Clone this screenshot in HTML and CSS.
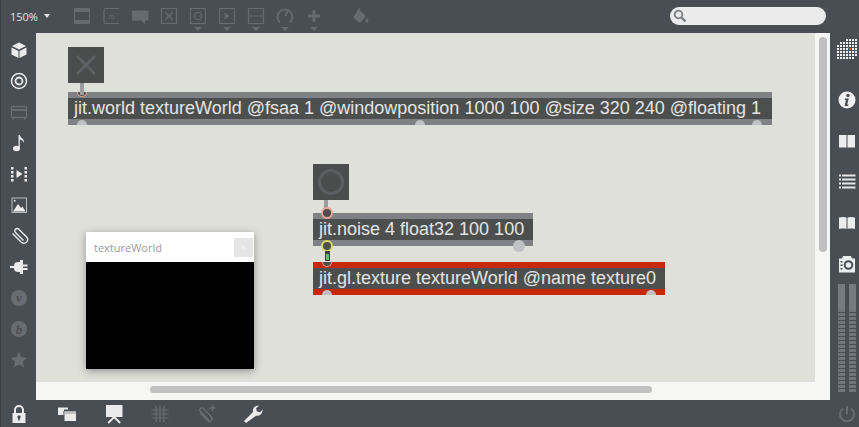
FILE: index.html
```html
<!DOCTYPE html>
<html lang="en">
<head>
    <meta charset="UTF-8">
    <title>textureWorld</title>
    <link rel="stylesheet" href="styles.css">
</head>
<body>
<div class="app">

    <!-- top toolbar -->
    <div class="topbar">
        <div class="zoom-label"><span>150%</span><i class="caret light"></i></div>
        <div class="tool"><svg width="18" height="18" viewBox="0 0 18 18" fill="none" stroke="currentColor"><path d="M1.5 1v16M1.5 1.5h15v15h-15"/><path d="M2 3.5h15M2 14.5h15" stroke-width="3"/></svg></div>
        <div class="tool"><svg width="18" height="18" viewBox="0 0 18 18" fill="none" stroke="currentColor" stroke-width="1.2"><path d="M17 1.5H4a2 2 0 0 0-2 2v11a2 2 0 0 0 2 2h13"/><text x="6.5" y="11.5" class="msg-m">m</text></svg></div>
        <div class="tool"><svg width="18" height="18" viewBox="0 0 18 18" fill="currentColor"><path d="M1 3.5h16.5v10H14v4l-4-4H1z"/></svg></div>
        <div class="tool"><svg width="18" height="18" viewBox="0 0 18 18" fill="none" stroke="currentColor" stroke-width="1.2"><rect x="1.5" y="1.5" width="15" height="15"/><path d="M5 5l8 8M13 5l-8 8"/></svg></div>
        <div class="tool"><svg width="18" height="18" viewBox="0 0 18 18" fill="none" stroke="currentColor" stroke-width="1.2"><rect x="1.5" y="1.5" width="15" height="15"/><circle cx="9" cy="9" r="3.5"/></svg><i class="caret"></i></div>
        <div class="tool"><svg width="18" height="18" viewBox="0 0 18 18" fill="none" stroke="currentColor" stroke-width="1.2"><rect x="1.5" y="1.5" width="15" height="15"/><path d="M6.5 5.5l5 3.5-5 3.5z" fill="currentColor" stroke="none"/></svg><i class="caret"></i></div>
        <div class="tool"><svg width="18" height="18" viewBox="0 0 18 18" fill="none" stroke="currentColor" stroke-width="1.2"><rect x="1.5" y="1.5" width="15" height="15"/><path d="M1.5 9h15"/></svg><i class="caret"></i></div>
        <div class="tool"><svg width="18" height="18" viewBox="0 0 18 18" fill="none" stroke="currentColor" stroke-width="1.8"><path d="M4 15.5A7.5 7.5 0 1 1 14 15.5"/><path d="M9 9l3-5"/></svg><i class="caret"></i></div>
        <div class="tool"><svg width="18" height="18" viewBox="0 0 18 18" fill="currentColor"><path d="M7.5 3h3v4.500H15v3h-4.500V15h-3v-4.500H3v-3h4.500z"/></svg><i class="caret"></i></div>
        <div class="tool bucket"><svg width="18" height="18" viewBox="0 0 18 18" fill="currentColor"><path d="M8 1l1.5 1-1 1.5L15 9l-6 7-7-5.500z"/><path d="M16 11c1 1.5 1.5 2.300 1.5 3a1.500 1.500 0 0 1-3 0c0-.7.5-1.500 1.500-3z"/></svg></div>
        <div class="search"><svg width="14" height="14" viewBox="0 0 14 14" fill="none" stroke="#7b7e82"><circle cx="5.5" cy="5.5" r="3.8" stroke-width="1.8"/><path d="M8.5 8.5l4 4" stroke-width="2.4"/></svg></div>
    </div>

    <!-- left object palette -->
    <div class="sidebar-left">
        <svg width="20" height="20" viewBox="0 0 20 20" class="on"><path d="M10 2.5l7 3.500-7 3.500L3 6z" fill="currentColor"/><path d="M2.5 7.5l7 3.500v7l-7-3.500zM17.5 7.5l-7 3.500v7l7-3.500z" fill="currentColor"/></svg>
        <svg width="20" height="20" viewBox="0 0 20 20" class="on" fill="none" stroke="currentColor"><circle cx="10" cy="10" r="7.5" stroke-width="1.5"/><circle cx="10" cy="10" r="3.5" stroke-width="1.8"/></svg>
        <svg width="20" height="20" viewBox="0 0 20 20" class="off" fill="none" stroke="currentColor" stroke-width="1.3"><rect x="2.5" y="4.5" width="15" height="11" rx="1"/><path d="M2.5 8h15" stroke-width="2"/><path d="M4 16v2M16 16v2"/></svg>
        <svg width="20" height="20" viewBox="0 0 20 20" class="on" fill="currentColor"><ellipse cx="7.5" cy="15.5" rx="3.5" ry="2.8"/><path d="M9.5 2h1.300c.4 3 5 3.500 4 8-.6-2.300-2.500-3.300-4-3.500V15H9.500z"/></svg>
        <svg width="20" height="20" viewBox="0 0 20 20" class="on" fill="currentColor"><path d="M7.5 6l6 4-6 4z"/><path d="M2 3h2.500v2.500H2zM2 7h2.500v2.500H2zM2 11h2.500v2.500H2zM2 15h2.500v2.500H2zM15.500 3H18v2.500h-2.500zM15.500 7H18v2.500h-2.500zM15.500 11H18v2.500h-2.500zM15.500 15H18v2.500h-2.500z"/></svg>
        <svg width="20" height="20" viewBox="0 0 20 20" class="on"><rect x="3" y="3" width="14.5" height="14.5" fill="none" stroke="#b9bbbd" stroke-width="1"/><circle cx="5.7" cy="5.7" r="1" fill="currentColor"/><path d="M4 16.500l5-7.500 3 4 1.500-1.500 3 5z" fill="currentColor"/></svg>
        <svg width="20" height="20" viewBox="0 0 20 20" class="on" fill="none" stroke="currentColor" stroke-width="1.4"><path d="M14.500 14.500L6.500 6.500a2.300 2.300 0 0 1 3.300-3.300l8 8a3.700 3.700 0 0 1-5.200 5.200L3.500 7.500"/></svg>
        <svg width="20" height="20" viewBox="0 0 20 20" class="on" fill="currentColor"><path d="M1 9h4v-.5C5 6 7 5 9 5h3v10H9c-2 0-4-1-4-3.500V11H1z"/><path d="M11 3h3v4.500h4.500v2H14V11h4.500v2H14v4h-3z"/></svg>
        <svg width="20" height="20" viewBox="0 0 20 20" class="off"><circle cx="10" cy="10" r="8" fill="currentColor"/><text x="10" y="14" class="badge-letter">v</text></svg>
        <svg width="20" height="20" viewBox="0 0 20 20" class="off"><circle cx="10" cy="10" r="8" fill="currentColor"/><text x="10" y="14.5" class="badge-letter">b</text></svg>
        <svg width="20" height="20" viewBox="0 0 20 20" class="off" fill="currentColor"><path d="M10 2l2.400 5.300 5.800.6-4.300 3.900 1.200 5.700L10 14.600 4.900 17.500l1.200-5.700L1.800 7.900l5.800-.6z"/></svg>
    </div>

    <!-- patcher -->
    <div class="canvas-frame">
        <div class="canvas">
            <div class="ui-box toggle-box" style="left:32px;top:14px"><svg width="36" height="36" viewBox="0 0 36 36" stroke="#5f6264" stroke-width="2.5"><path d="M9 9l18 18M27 9L9 27"/></svg></div>
            <div class="obj" style="left:32px;top:59px;width:704px">jit.world textureWorld @fsaa 1 @windowposition 1000 100 @size 320 240 @floating 1
                <span class="inlet half" style="left:9px"></span>
                <span class="outlet" style="left:9px"></span>
                <span class="outlet" style="left:347px"></span>
                <span class="outlet" style="left:684px"></span>
            </div>
            <div class="cord" style="left:44px;top:50px;height:12px"></div>

            <div class="ui-box button-box" style="left:277px;top:131px"><span class="ring"></span></div>
            <div class="cord" style="left:288px;top:167px;height:13px"></div>
            <div class="obj" style="left:277px;top:180px;width:220px">jit.noise 4 float32 100 100
                <span class="inlet full" style="left:8px"></span>
                <span class="outlet-full hot" style="left:8px"></span>
                <span class="outlet-full" style="left:200px"></span>
            </div>
            <div class="obj selected" style="left:277px;top:229px;width:352px">jit.gl.texture textureWorld @name texture0
                <span class="inlet half" style="left:9px"></span>
                <span class="outlet" style="left:9px"></span>
                <span class="outlet" style="left:333px"></span>
            </div>
            <div class="matrix-cord"></div>

            <div class="gl-window">
                <div class="gl-title"><span>textureWorld</span><span class="gl-close">×</span></div>
                <div class="gl-view"></div>
            </div>
        </div>
        <div class="thumb-v"></div>
        <div class="thumb-h"></div>
    </div>

    <!-- right sidebar -->
    <div class="sidebar-right">
        <div class="rb first"><svg width="21" height="21" viewBox="0 0 21 21"><defs><pattern id="dots" width="3" height="3" patternUnits="userSpaceOnUse"><rect width="2" height="2" fill="#f0f0f0"/></pattern></defs><path d="M9 0h12v18h-3v3H0V6h3V3h6z" fill="url(#dots)"/><rect x="12" y="9" width="2" height="2" fill="#e8641a"/></svg></div>
        <div class="rb"><svg width="18" height="18" viewBox="0 0 18 18"><circle cx="9" cy="9" r="8.5" fill="#f0f0f0"/><circle cx="10" cy="4.5" r="1.7" fill="#494d54"/><path d="M7 7.500h3.800l-1.600 6h1.300l-.4 1.500H6.500l1.500-6H6.800z" fill="#494d54"/></svg></div>
        <div class="rb"><svg width="18" height="16" viewBox="0 0 18 16" fill="#ececec"><rect x="1" y="2" width="7.5" height="12.5"/><rect x="9.5" y="2" width="7.5" height="12.5"/></svg></div>
        <div class="rb"><svg width="18" height="16" viewBox="0 0 18 16" fill="#e6e6e6"><path d="M1 .5h2v2H1zM4 .5h13.500v2H4zM1 4.500h2v2H1zM4 4.500h13.500v2H4zM1 8.500h2v2H1zM4 8.500h13.500v2H4zM1 12.500h2v2H1zM4 12.500h13.500v2H4z"/></svg></div>
        <div class="rb"><svg width="18" height="16" viewBox="0 0 18 16" fill="#ececec"><path d="M1 2.500c3-.8 5.500-.8 7.500 0V14c-2-.6-4.500-.6-7.500 0zM17 2.500c-3-.8-5.500-.8-7.500 0V14c2-.6 4.500-.6 7.500 0z"/></svg></div>
        <div class="rb"><svg width="18" height="18" viewBox="0 0 18 18"><path d="M1 3.500h3L5 1h8l1 2.500h3v14H1z" fill="#ececec"/><circle cx="10.5" cy="10" r="3.8" fill="none" stroke="#494d54" stroke-width="2"/><path d="M2.500 6h2v1.500h-2zM2.500 9.500h2V11h-2zM2.500 13h2v1.500h-2z" fill="#494d54"/></svg></div>
        <div class="meters"><div class="meter"></div><div class="meter"></div></div>
    </div>

    <!-- bottom toolbar -->
    <div class="bottombar">
        <svg width="20" height="20" viewBox="0 0 20 20" class="on"><path d="M6 9V6a4 4 0 0 1 8 0v3" fill="none" stroke="currentColor" stroke-width="2"/><path d="M3.500 9h13v10h-13z" fill="currentColor"/><circle cx="10" cy="13" r="1.7" fill="#494d54"/><path d="M9.200 13.500h1.600v3H9.200z" fill="#494d54"/></svg>
        <svg width="20" height="20" viewBox="0 0 20 20" class="on" fill="currentColor"><path d="M1 3.500h10v2H7V11H1z"/><path d="M7 7h12.500v10.500H7z" stroke="#494d54" stroke-width="1"/><path d="M7.500 7.500H19V10H7.500z" fill="#bfc1c3"/></svg>
        <svg width="20" height="20" viewBox="0 0 20 20" class="on" fill="currentColor"><path d="M2 1h16.500v12H2z"/><path d="M10.200 13l-6 6M10.200 13l6 6" stroke="currentColor" stroke-width="1.8"/></svg>
        <svg width="20" height="20" viewBox="0 0 20 20" class="off" fill="none" stroke="currentColor" stroke-width="1.2"><path d="M6 1.500v17M14 1.500v17M1.500 6h17M1.500 14h17M10 1.500v17M1.500 10h17"/></svg>
        <svg width="20" height="20" viewBox="0 0 20 20" class="off" fill="none" stroke="currentColor" stroke-width="1.3"><path d="M12 16L3.500 7.500a2 2 0 0 1 3-3l8 8.500a2.600 2.600 0 0 1-4 3.500L3 9"/><path d="M15.500 1v6M12.500 4h6" stroke-width="1.5"/></svg>
        <svg width="20" height="20" viewBox="0 0 20 20" class="on" fill="currentColor"><path d="M1 17l9-9c-.8-3 1.500-6.500 6-6.500l-3 3 1 3 3 .8 2.500-2.800c.3 4-3 7-6.500 6.200L3 19z"/></svg>
        <svg width="20" height="20" viewBox="0 0 20 20" class="off power" fill="none" stroke="currentColor" stroke-width="2"><path d="M6 4.500a7 7 0 1 0 8 0"/><path d="M10 2v8"/></svg>
    </div>

</div>
</body>
</html>
```

FILE: styles.css
```css
* {
    box-sizing: border-box;
}
html, body {
    margin: 0;
    height: 100%;
    overflow: hidden;
}
body {
    font-family: "Liberation Sans", Arial, sans-serif;
    background-color: #494d54;
}
.app {
    display: grid;
    grid-template-columns: 36px 794px 29px;
    grid-template-rows: 33px 367px 27px;
    width: 859px;
    height: 427px;
    box-shadow: inset 1px 0 0 #3a3f45;
}
svg {
    display: block;
    flex: none;
}
.on { color: #ebebeb; }
.off { color: #696d73; }

/* top toolbar */
.topbar {
    grid-column: 1 / 4;
    display: flex;
    color: #666a71;
}
.zoom-label {
    width: 67.5px;
    padding: 9px 0 0 10px;
    display: flex;
    align-items: flex-start;
    gap: 6px;
    font-family: "Open Sans", sans-serif;
    font-size: 11px;
    line-height: 15px;
    color: #e4e4e4;
}
.tool {
    width: 29px;
    padding-top: 7px;
    display: flex;
    flex-direction: column;
    align-items: center;
    gap: 2px;
}
.tool.bucket {
    margin-left: 17px;
}
.caret {
    width: 0;
    height: 0;
    border-left: 4px solid transparent;
    border-right: 4px solid transparent;
    border-top: 4px solid #666a71;
}
.caret.light {
    margin-top: 5px;
    border-left-width: 3px;
    border-right-width: 3px;
    border-top-color: #e4e4e4;
}
.msg-m {
    font-family: "Liberation Serif", serif;
    font-style: italic;
    font-size: 8px;
    fill: currentColor;
    stroke: none;
}
.search {
    margin: 7px 33px 0 auto;
    width: 156px;
    height: 18px;
    padding: 2px 0 0 3px;
    border-radius: 9px;
    background: #ebebeb;
}

/* left palette */
.sidebar-left {
    display: flex;
    flex-direction: column;
    align-items: center;
    gap: 11px;
    padding: 7px 0 0 2px;
}
.badge-letter {
    font-family: "Liberation Serif", serif;
    font-style: italic;
    font-weight: bold;
    font-size: 13px;
    text-anchor: middle;
    fill: #494d54;
}

/* patcher */
.canvas-frame {
    position: relative;
    background: #f6f6f5;
    overflow: hidden;
}
.canvas {
    position: relative;
    width: 779px;
    height: 349px;
    background: #dfe0da;
}
.ui-box {
    position: absolute;
    width: 36px;
    height: 36px;
    background: #4b4d4d;
}
.ring {
    display: block;
    width: 26px;
    height: 26px;
    margin: 5px;
    border: 3px solid #5c5f61;
    border-radius: 50%;
}
.cord {
    position: absolute;
    width: 4px;
    background: #9b9c9d;
}
.obj {
    position: absolute;
    height: 33px;
    padding: 0 6px;
    border-top: 6px solid #808185;
    border-bottom: 6px solid #808185;
    background: #4d4f4e;
    color: #e4e4e4;
    font-size: 18px;
    line-height: 21px;
    white-space: nowrap;
}
.obj.selected {
    border-color: #c8280a;
}
.inlet, .outlet, .outlet-full {
    position: absolute;
    width: 10px;
}
.inlet.half {
    top: -6px;
    height: 5px;
    border: 1px solid #f0a595;
    border-top: none;
    border-radius: 0 0 6px 6px;
    background: #4d4f4e;
}
.inlet.full {
    top: -12px;
    height: 12px;
    width: 12px;
    border: 2px solid #f0a595;
    border-radius: 50%;
    background: #4d4f4e;
}
.outlet {
    bottom: -6px;
    height: 5px;
    border-radius: 5px 5px 0 0;
    background: #c0c1c4;
}
.outlet-full {
    bottom: -12px;
    height: 12px;
    width: 12px;
    border-radius: 50%;
    background: #c0c1c4;
}
.outlet-full.hot {
    border: 2px solid #d9dc60;
    background: #4d4f4e;
}
.matrix-cord {
    position: absolute;
    left: 289px;
    top: 218px;
    width: 5px;
    height: 10px;
    border: 1px solid #3e403f;
    border-top-width: 3px;
    background: #5fc26a;
}
.gl-window {
    position: absolute;
    left: 50px;
    top: 199px;
    width: 168px;
    height: 137px;
    box-shadow: 0 2px 8px rgba(0, 0, 0, 0.35);
}
.gl-title {
    height: 30px;
    padding: 0 1px 0 8px;
    display: flex;
    justify-content: space-between;
    align-items: center;
    background: #fff;
    color: #9a9aa0;
    font-family: "Open Sans", sans-serif;
    font-size: 11px;
}
.gl-close {
    width: 19px;
    height: 19px;
    background: #e5e5e5;
    color: #f4f4f4;
    text-align: center;
    line-height: 18px;
}
.gl-view {
    height: 107px;
    background: #000;
}

/* scrollbars */
.thumb-v {
    position: absolute;
    left: 783px;
    top: 4px;
    width: 8px;
    height: 215px;
    border-radius: 4px;
    background: #c0c0c0;
}
.thumb-h {
    position: absolute;
    left: 114px;
    top: 353px;
    width: 502px;
    height: 7px;
    border-radius: 4px;
    background: #c0c0c0;
}

/* right sidebar */
.sidebar-right {
    display: flex;
    flex-direction: column;
    align-items: center;
}
.rb {
    height: 41px;
    display: flex;
    align-items: center;
    justify-content: center;
    flex: none;
    width: 100%;
    padding-left: 5px;
}
.rb.first {
    height: 46.5px;
    align-items: flex-start;
    padding: 6px 0 0 6px;
}
.meters {
    margin: -1px 0 0 5px;
    display: flex;
    gap: 4px;
}
.meter {
    width: 7px;
    height: 108px;
    background:
        linear-gradient(#777b80, #777b80) top / 100% 25px no-repeat,
        repeating-linear-gradient(#494d54 0, #494d54 1px, #72767b 1px, #72767b 4px);
}

/* bottom toolbar */
.bottombar {
    grid-column: 1 / 4;
    display: flex;
    align-items: center;
    gap: 26.5px;
    padding: 0 2px 0 9px;
}
.bottombar svg:nth-child(2) {
    margin-left: 1.5px;
}
.bottombar .power {
    margin-left: auto;
}
```
